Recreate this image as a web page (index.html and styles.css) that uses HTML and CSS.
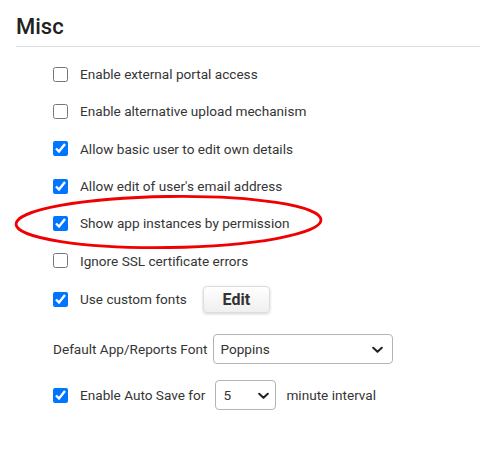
FILE: index.html
```html
<!DOCTYPE html>
<html lang="en">
<head>
<meta charset="utf-8">
<title>Misc</title>
<link rel="stylesheet" href="styles.css">
</head>
<body>
<section class="panel">
  <h2 class="title">Misc</h2>
  <div class="options">
    <label class="row"><input type="checkbox" class="cb"><span>Enable external portal access</span></label>
    <label class="row"><input type="checkbox" class="cb"><span>Enable alternative upload mechanism</span></label>
    <label class="row"><input type="checkbox" class="cb" checked><span>Allow basic user to edit own details</span></label>
    <label class="row"><input type="checkbox" class="cb" checked><span>Allow edit of user's email address</span></label>
    <label class="row"><input type="checkbox" class="cb" checked><span>Show app instances by permission</span></label>
    <label class="row"><input type="checkbox" class="cb"><span>Ignore SSL certificate errors</span></label>
    <div class="row row-fonts">
      <input type="checkbox" class="cb" checked><span>Use custom fonts</span>
      <button class="btn" type="button">Edit</button>
    </div>
    <div class="row row-default">
      <span>Default App/Reports Font</span>
      <div class="select select-wide"><span>Poppins</span><svg class="chev" viewBox="0 0 12 8" width="11" height="8"><path d="M1.3 1.5 L6 6 L10.7 1.5" fill="none" stroke="#222" stroke-width="2.2" stroke-linecap="round" stroke-linejoin="round"/></svg></div>
    </div>
    <div class="row row-auto">
      <input type="checkbox" class="cb" checked><span>Enable Auto Save for</span>
      <div class="select select-small"><span>5</span><svg class="chev" viewBox="0 0 12 8" width="11" height="8"><path d="M1.3 1.5 L6 6 L10.7 1.5" fill="none" stroke="#222" stroke-width="2.2" stroke-linecap="round" stroke-linejoin="round"/></svg></div>
      <span>minute interval</span>
    </div>
  </div>
  <svg class="highlight" width="480" height="449" viewBox="0 0 480 449">
    <ellipse cx="168.5" cy="222" rx="152.5" ry="25.5" transform="rotate(-0.8 168.5 222)" fill="none" stroke="#f00000" stroke-width="2.8"/>
  </svg>
</section>
</body>
</html>
```

FILE: styles.css
```css
html, body {
  margin: 0;
  padding: 0;
  background: #ffffff;
}

body {
  font-family: Roboto, "Liberation Sans", Arial, sans-serif;
  color: #353535;
  font-size: 13.6px;
}

.panel {
  position: relative;
  width: 480px;
  height: 449px;
  overflow: hidden;
}

.title {
  margin: 0 0 0 16px;
  padding: 14px 0 6px 0;
  font-size: 22px;
  line-height: 26px;
  font-weight: 500;
  color: #222222;
  border-bottom: 1px solid #dcdcdc;
}

.options {
  display: flex;
  flex-direction: column;
  padding: 8.5px 0 0 53px;
}

.row {
  display: flex;
  align-items: center;
  height: 37.3px;
  line-height: 16px;
}

.cb {
  width: 15px;
  height: 15px;
  margin: 0 12px 0 0;
  flex: none;
  accent-color: #0075ff;
}

.row-fonts {
  height: 40px;
}

.btn {
  margin-left: 16px;
  width: 67px;
  height: 27px;
  border: 1px solid #dddddd;
  border-radius: 4px;
  background: linear-gradient(#ffffff, #efefef);
  box-shadow: 0 1px 3px rgba(0, 0, 0, 0.18);
  font-family: Roboto, "Liberation Sans", Arial, sans-serif;
  font-size: 16px;
  font-weight: 700;
  color: #333333;
  padding: 0;
}

.row-default {
  height: 60px;
}

.row-auto {
  height: 32px;
}

.select {
  display: flex;
  align-items: center;
  justify-content: space-between;
  box-sizing: border-box;
  height: 30px;
  border: 1px solid #b4b4b4;
  border-radius: 4px;
  background: #ffffff;
  color: #333333;
  font-size: 13.6px;
}

.select-wide {
  width: 180px;
  margin-left: 6px;
  padding: 0 9px 0 6px;
}

.select-small {
  width: 61px;
  margin: 0 10px 0 10px;
  padding: 0 6px 0 7px;
}

.chev {
  display: block;
  margin-top: 2px;
}

.highlight {
  position: absolute;
  left: 0;
  top: 0;
  pointer-events: none;
}
```
